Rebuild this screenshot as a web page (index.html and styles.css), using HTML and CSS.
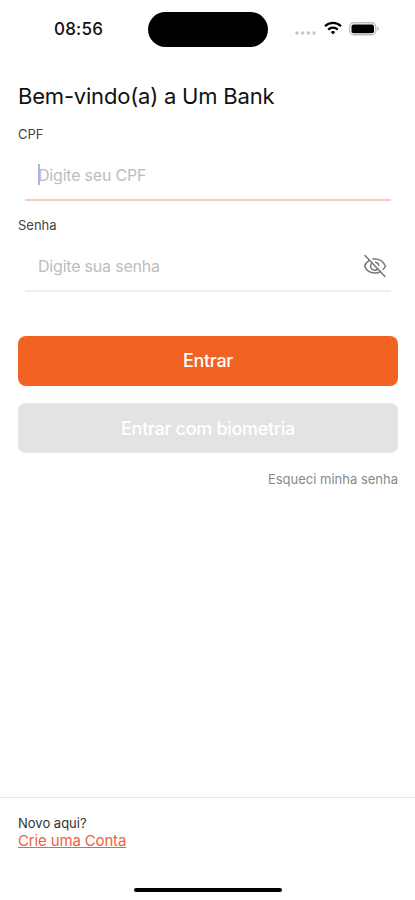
FILE: index.html
```html
<!DOCTYPE html>
<html lang="pt-BR">
<head>
    <meta charset="UTF-8">
    <meta name="viewport" content="width=device-width, initial-scale=1.0">
    <title>Um Bank</title>
    <link rel="stylesheet" href="styles.css">
</head>
<body>
    <div class="app">
        <header class="status-bar">
            <span class="hora">08:56</span>
            <div class="ilha"></div>
            <div class="status-icones">
                <svg class="sinal" width="21" height="4" viewBox="0 0 21 4" fill="#c4c4c4">
                    <circle cx="2" cy="2" r="1.7"/>
                    <circle cx="7.7" cy="2" r="1.7"/>
                    <circle cx="13.4" cy="2" r="1.7"/>
                    <circle cx="19" cy="2" r="1.7"/>
                </svg>
                <svg class="wifi" width="18" height="14" viewBox="0 0 18 14" fill="none" stroke="#000" stroke-width="2.2">
                    <path d="M1 5.2a11.5 11.5 0 0 1 16 0"/>
                    <path d="M4.2 8.6a6.8 6.8 0 0 1 9.6 0"/>
                    <path d="M9 13.5l-2.2-2.4a3.2 3.2 0 0 1 4.4 0z" fill="#000" stroke="none"/>
                </svg>
                <svg class="bateria" width="31" height="14" viewBox="0 0 31 14">
                    <rect x=".75" y=".75" width="26" height="12" rx="3.8" fill="#fff" stroke="#bdbdbd" stroke-width="1.3"/>
                    <rect x="2.5" y="2.4" width="22.5" height="8.8" rx="2" fill="#000"/>
                    <path d="M28.2 4.7c2.4.8 2.4 3.4 0 4.2z" fill="#bdbdbd"/>
                </svg>
            </div>
        </header>

        <main class="conteudo">
            <h1>Bem-vindo(a) a Um Bank</h1>

            <label for="cpf">CPF</label>
            <div class="campo campo-ativo">
                <input type="text" id="cpf" placeholder="Digite seu CPF">
                <span class="cursor"></span>
            </div>

            <label for="senha">Senha</label>
            <div class="campo">
                <input type="password" id="senha" placeholder="Digite sua senha">
                <svg class="olho" width="24" height="24" viewBox="0 0 24 24" fill="none" stroke="#777" stroke-width="1.5" stroke-linecap="round" stroke-linejoin="round">
                    <path d="M2 1.5l20 21"/>
                    <path d="M6 6.6C3.8 8 2.3 10 1.6 12c1.6 4.2 5.7 7 10.4 7 2 0 3.9-.5 5.5-1.4"/>
                    <path d="M10 5.1c5.7-.9 10.5 2.2 12.4 6.9-.5 1.2-1.2 2.3-2.2 3.3"/>
                    <path d="M8.8 9.3a4 4 0 1 0 5.7 5.8"/>
                    <path d="M12.6 8.2a4 4 0 0 1 3.2 3.3"/>
                </svg>
            </div>

            <button class="btn btn-entrar">Entrar</button>
            <button class="btn btn-biometria" disabled>Entrar com biometria</button>
            <a class="esqueci" href="#">Esqueci minha senha</a>
        </main>

        <footer class="rodape">
            <p>Novo aqui?</p>
            <a href="#">Crie uma Conta</a>
            <div class="barra-home"></div>
        </footer>
    </div>
</body>
</html>
```
FILE: styles.css
```css
* {
    box-sizing: border-box;
}
body {
    margin: 0;
    background-color: #fff;
    font-family: Inter, "Liberation Sans", sans-serif;
    color: #111;
}
.app {
    display: flex;
    flex-direction: column;
    height: 900px;
    overflow: hidden;
}
.status-bar {
    display: grid;
    grid-template-columns: 148px 120px 1fr;
    align-items: center;
    height: 58px;
}
.hora {
    padding-left: 54px;
    font-size: 17px;
    font-weight: 500;
    letter-spacing: 0.2px;
}
.ilha {
    height: 35px;
    border-radius: 18px;
    background-color: #000;
}
.status-icones {
    display: flex;
    align-items: center;
    padding-left: 27px;
}
.sinal {
    margin-top: 8px;
}
.wifi {
    margin-top: -2px;
    margin-left: 8px;
}
.bateria {
    margin-top: -1px;
    margin-left: 7px;
}
.conteudo {
    display: flex;
    flex-direction: column;
    flex: 1;
    padding: 24px 17px 0 18px;
}
h1 {
    margin: 0 0 16px;
    font-size: 22px;
    font-weight: 400;
    line-height: 28px;
    letter-spacing: -0.2px;
}
label {
    font-size: 13px;
    line-height: 16px;
    color: #444;
}
.campo {
    position: relative;
    display: flex;
    align-items: center;
    height: 59px;
    margin: 0 7px 16px;
    padding-top: 8px;
    border-bottom: 2px solid #eee;
}
.campo-ativo {
    border-bottom-color: #f8cbc0;
}
input {
    flex: 1;
    min-width: 0;
    padding: 0 0 0 13px;
    border: none;
    outline: none;
    background: none;
    font-family: inherit;
    font-size: 16px;
    letter-spacing: -0.2px;
}
input::placeholder {
    color: #bdbdbd;
    opacity: 1;
}
.cursor {
    position: absolute;
    left: 13px;
    top: 22px;
    width: 2px;
    height: 21px;
    background-color: #a9b6ee;
}
.olho {
    margin-right: 4px;
}
.btn {
    height: 50px;
    border: none;
    border-radius: 8px;
    font-family: inherit;
    font-size: 18px;
    font-weight: 500;
    letter-spacing: -0.3px;
    color: #fff;
}
.btn-entrar {
    padding-bottom: 2px;
    margin-top: 28px;
    background-color: #f26222;
}
.btn-biometria {
    margin-top: 17px;
    background-color: #e3e3e3;
}
.esqueci {
    align-self: flex-end;
    margin-top: 18px;
    font-size: 13px;
    line-height: 16px;
    color: #8a8a8a;
    text-decoration: none;
}
.rodape {
    display: flex;
    flex-direction: column;
    align-items: flex-start;
    height: 103px;
    padding: 16px 18px 0;
    border-top: 1px solid #e8e8e8;
}
.rodape p {
    margin: 0;
    font-size: 13px;
    line-height: 18px;
    color: #333;
}
.rodape a {
    font-size: 15px;
    line-height: 18px;
    letter-spacing: -0.15px;
    color: #f2603c;
}
.barra-home {
    align-self: center;
    width: 148px;
    height: 4px;
    margin-top: 38px;
    border-radius: 2px;
    background-color: #000;
}
```
